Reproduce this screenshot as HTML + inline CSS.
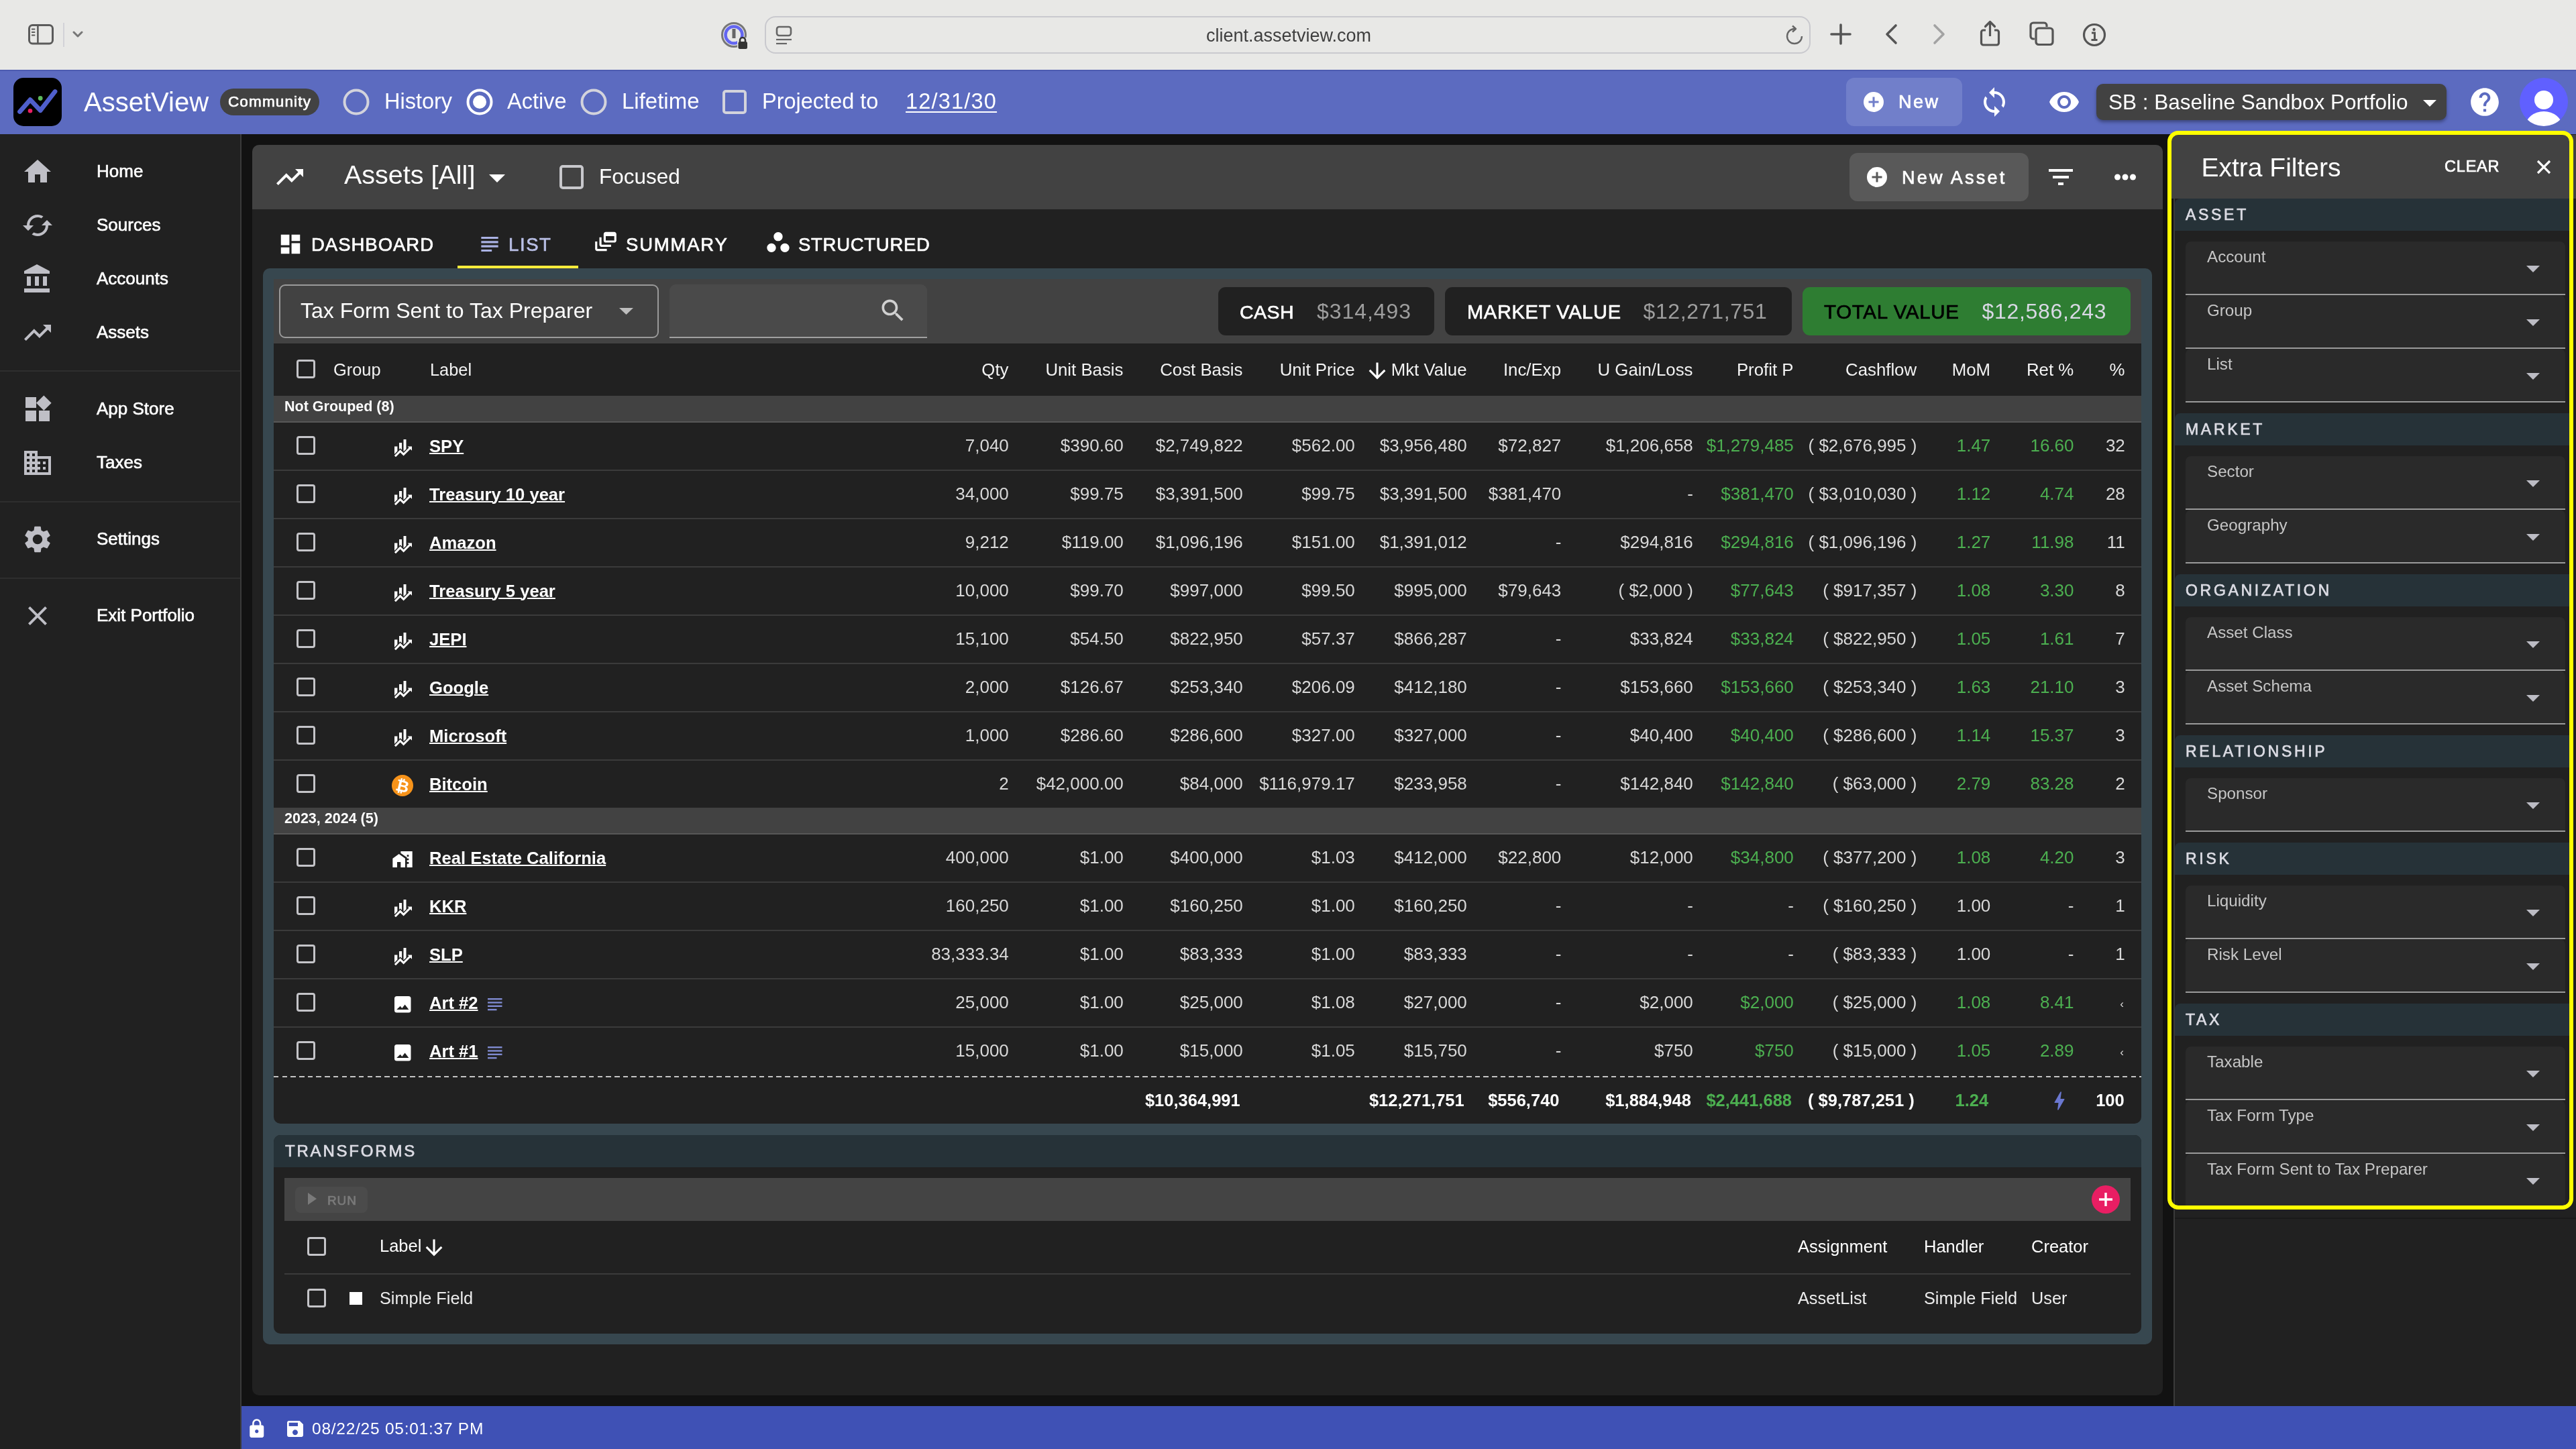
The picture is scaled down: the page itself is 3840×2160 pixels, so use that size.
<!DOCTYPE html><html><head><meta charset="utf-8"><style>
*{box-sizing:border-box;margin:0;padding:0}
html,body{width:3840px;height:2160px;overflow:hidden;background:#121212;font-family:"Liberation Sans",sans-serif}
.t{position:absolute;line-height:1;white-space:nowrap}
.r{position:absolute;display:block}
</style></head><body><div id="root" style="position:absolute;left:0;top:0;width:3840px;height:2160px;will-change:transform"><div class="r" style="left:0px;top:0px;width:3840px;height:104px;background:#e8e8e6;"></div>
<svg class="r" style="left:40px;top:34px;" width="42" height="34" viewBox="0 0 42 34"><rect x="3.5" y="3.5" width="35" height="27.5" rx="5" fill="none" stroke="#5b5b5b" stroke-width="3"/><line x1="16.4" y1="4" x2="16.4" y2="31" stroke="#5b5b5b" stroke-width="2.6"/><line x1="7" y1="9.5" x2="12.3" y2="9.5" stroke="#5b5b5b" stroke-width="2"/><line x1="7" y1="14" x2="12.3" y2="14" stroke="#5b5b5b" stroke-width="2"/><line x1="7" y1="18.5" x2="12.3" y2="18.5" stroke="#5b5b5b" stroke-width="2"/></svg>
<div class="r" style="left:94px;top:34px;width:2px;height:36px;background:#d2d2d8;"></div>
<svg class="r" style="left:108px;top:45px;" width="16" height="12" viewBox="0 0 16 12"><polyline points="2,3 8,9 14,3" fill="none" stroke="#777" stroke-width="3" stroke-linecap="round" stroke-linejoin="round"/></svg>
<svg class="r" style="left:1074px;top:31px;" width="44" height="44" viewBox="0 0 44 44"><circle cx="20" cy="21" r="17.5" fill="none" stroke="#777" stroke-width="3"/><circle cx="20" cy="21" r="12.5" fill="none" stroke="#6366f1" stroke-width="4.5"/><rect x="17.5" y="12" width="5" height="14" fill="#666"/><rect x="25" y="25" width="18" height="19" rx="3" fill="#e8e8e6"/><path d="M29 32v-3a4 4 0 0 1 8 0v3" fill="none" stroke="#333" stroke-width="2.6"/><rect x="26.5" y="31" width="13.5" height="11" rx="2.5" fill="#333"/></svg>
<div class="r" style="left:1140px;top:24px;width:1559px;height:56px;border:2.5px solid #c9c9ce;border-radius:16px"></div>
<svg class="r" style="left:1156px;top:38px;" width="26" height="30" viewBox="0 0 26 30"><rect x="2" y="2" width="21" height="13" rx="3.5" fill="none" stroke="#666" stroke-width="2.6"/><line x1="1" y1="21" x2="24" y2="21" stroke="#666" stroke-width="2.2"/><line x1="1" y1="27" x2="17" y2="27" stroke="#666" stroke-width="2.2"/></svg>
<div class="t" style="left:1921.0px;transform:translateX(-50%);top:40.1px;font-size:27px;color:#3f3f3f;">client.assetview.com</div>
<svg class="r" style="left:2660px;top:36px;" width="30" height="32" viewBox="0 0 30 32"><path d="M15 7 A11 11 0 1 0 26 18" fill="none" stroke="#666" stroke-width="2.4"/><polyline points="12,2.5 17,7 12,11.5" fill="none" stroke="#666" stroke-width="2.4" stroke-linejoin="round"/></svg>
<svg class="r" style="left:2728px;top:35px;" width="32" height="32" viewBox="0 0 32 32"><line x1="16" y1="2" x2="16" y2="30" stroke="#555" stroke-width="3.6" stroke-linecap="round"/><line x1="2" y1="16" x2="30" y2="16" stroke="#555" stroke-width="3.6" stroke-linecap="round"/></svg>
<svg class="r" style="left:2806px;top:35px;" width="26" height="32" viewBox="0 0 26 32"><polyline points="20,3 7,16 20,29" fill="none" stroke="#555" stroke-width="3.6" stroke-linecap="round" stroke-linejoin="round"/></svg>
<svg class="r" style="left:2878px;top:35px;" width="26" height="32" viewBox="0 0 26 32"><polyline points="6,3 19,16 6,29" fill="none" stroke="#a3a3a3" stroke-width="3.6" stroke-linecap="round" stroke-linejoin="round"/></svg>
<svg class="r" style="left:2948px;top:30px;" width="38" height="40" viewBox="0 0 38 40"><path d="M12 15H8.5a3 3 0 0 0-3 3v16a3 3 0 0 0 3 3h20a3 3 0 0 0 3-3V18a3 3 0 0 0-3-3H25" fill="none" stroke="#555" stroke-width="3.2"/><line x1="18.5" y1="3" x2="18.5" y2="24" stroke="#555" stroke-width="3.2"/><polyline points="11.5,9.5 18.5,2.5 25.5,9.5" fill="none" stroke="#555" stroke-width="3.2" stroke-linejoin="round" stroke-linecap="round"/></svg>
<svg class="r" style="left:3024px;top:31px;" width="40" height="40" viewBox="0 0 40 40"><path d="M9 27H7a4 4 0 0 1-4-4V7a4 4 0 0 1 4-4h16a4 4 0 0 1 4 4v2" fill="none" stroke="#555" stroke-width="3.2"/><rect x="11" y="11" width="25" height="24.5" rx="4" fill="none" stroke="#555" stroke-width="3.2"/></svg>
<svg class="r" style="left:3103px;top:33px;" width="38" height="38" viewBox="0 0 38 38"><circle cx="19" cy="19" r="15.5" fill="none" stroke="#555" stroke-width="3.2"/><circle cx="18.5" cy="11" r="2.2" fill="#555"/><path d="M15 16h4.5v10.5M14.5 26.5h9" fill="none" stroke="#555" stroke-width="3"/></svg>
<div class="r" style="left:0px;top:104px;width:3840px;height:96px;background:#5c6bc0;"></div>
<div class="r" style="left:0px;top:104px;width:3840px;height:2px;background:#4d5bb0;"></div>
<div class="r" style="left:20px;top:116px;width:72px;height:72px;background:#000;border-radius:15px"></div>
<svg class="r" style="left:20px;top:116px;" width="72" height="72" viewBox="0 0 72 72"><polyline points="9.5,50.5 25,32.7 40.2,48.7 62,20.5" fill="none" stroke="#4f5fcc" stroke-width="6.8" stroke-linecap="round" stroke-linejoin="round"/><circle cx="25" cy="49.3" r="3.3" fill="#e91e63"/><circle cx="40.2" cy="30.5" r="3.4" fill="#5cb85c"/></svg>
<div class="t" style="left:125.0px;top:132.1px;font-size:40px;color:#fff;">AssetView</div>
<div class="r" style="left:328px;top:132px;width:148px;height:40px;background:#424242;border-radius:20px"></div>
<div class="t" style="left:402.0px;transform:translateX(-50%);top:141.0px;font-size:22.5px;color:#fff;-webkit-text-stroke:0.7px #fff;letter-spacing:1.15px;">Community</div>
<svg class="r" style="left:511px;top:132px;" width="40" height="40" viewBox="0 0 40 40"><circle cx="20" cy="20" r="17.5" fill="none" stroke="#d3d3dc" stroke-width="4"/></svg>
<svg class="r" style="left:695px;top:132px;" width="40" height="40" viewBox="0 0 40 40"><circle cx="20" cy="20" r="17.5" fill="none" stroke="#fff" stroke-width="4"/><circle cx="20" cy="20" r="10" fill="#fff"/></svg>
<svg class="r" style="left:865px;top:132px;" width="40" height="40" viewBox="0 0 40 40"><circle cx="20" cy="20" r="17.5" fill="none" stroke="#d3d3dc" stroke-width="4"/></svg>
<div class="t" style="left:573.0px;top:134.5px;font-size:32.5px;color:#fff;">History</div>
<div class="t" style="left:756.0px;top:134.5px;font-size:32.5px;color:#fff;">Active</div>
<div class="t" style="left:927.0px;top:134.1px;font-size:33px;color:#fff;">Lifetime</div>
<div class="r" style="left:1077px;top:134px;width:36px;height:36px;border:4px solid #d3d3dc;border-radius:5px"></div>
<div class="t" style="left:1136.0px;top:134.5px;font-size:32.5px;color:#fff;">Projected to</div>
<div class="t" style="left:1350.0px;top:134.5px;font-size:32.5px;color:#fff;letter-spacing:1.2px;text-decoration:underline;text-decoration-thickness:2px;text-underline-offset:4px">12/31/30</div>
<div class="r" style="left:2752px;top:116px;width:173px;height:72px;background:#717fca;border-radius:12px"></div>
<svg class="r" style="left:2778px;top:137px;" width="30" height="30" viewBox="0 0 30 30"><circle cx="15" cy="15" r="15" fill="#fff"/><path d="M15 7.5v15M7.5 15h15" stroke="#717fca" stroke-width="3"/></svg>
<div class="t" style="left:2830.0px;top:139.1px;font-size:27px;color:#fff;-webkit-text-stroke:0.7px #fff;letter-spacing:2.5px;">New</div>
<svg class="r" style="left:2949px;top:128px;" width="48" height="48" viewBox="0 0 24 24"><path fill="#fff" d="M12 4V1L8 5l4 4V6c3.31 0 6 2.69 6 6 0 1.01-.25 1.97-.7 2.8l1.46 1.46C19.54 15.03 20 13.57 20 12c0-4.42-3.58-8-8-8zm0 14c-3.31 0-6-2.69-6-6 0-1.01.25-1.97.7-2.8L5.24 7.74C4.46 8.97 4 10.43 4 12c0 4.42 3.58 8 8 8v3l4-4-4-4v3z"/></svg>
<svg class="r" style="left:3053px;top:128px;" width="48" height="48" viewBox="0 0 24 24"><path fill="#fff" d="M12 4.5C7 4.5 2.73 7.61 1 12c1.73 4.39 6 7.5 11 7.5s9.27-3.11 11-7.5c-1.73-4.39-6-7.5-11-7.5zM12 17c-2.76 0-5-2.24-5-5s2.24-5 5-5 5 2.24 5 5-2.24 5-5 5zm0-8c-1.66 0-3 1.34-3 3s1.34 3 3 3 3-1.34 3-3-1.34-3-3-3z"/></svg>
<div class="r" style="left:3125px;top:125px;width:522px;height:54px;background:#424242;border-radius:10px;box-shadow:0 3px 5px rgba(0,0,0,0.35)"></div>
<div class="t" style="left:3143.0px;top:137.3px;font-size:31.5px;color:#fff;">SB : Baseline Sandbox Portfolio</div>
<svg class="r" style="left:3612px;top:149px;" width="20" height="10" viewBox="0 0 20 10"><path d="M0 0h20L10 10z" fill="#fff"/></svg>
<svg class="r" style="left:3679px;top:127px;" width="50" height="50" viewBox="0 0 24 24"><path fill="#fff" d="M12 2C6.48 2 2 6.48 2 12s4.48 10 10 10 10-4.48 10-10S17.52 2 12 2zm1 17h-2v-2h2v2zm2.07-7.75l-.9.92C13.45 12.9 13 13.5 13 15h-2v-.5c0-1.1.45-2.1 1.17-2.83l1.24-1.26c.37-.36.59-.86.59-1.41 0-1.1-.9-2-2-2s-2 .9-2 2H8c0-2.21 1.79-4 4-4s4 1.79 4 4c0 .88-.36 1.68-.93 2.25z"/></svg>
<div class="r" style="left:3756px;top:116px;width:72px;height:72px;background:#6060ff;border-radius:50%;overflow:hidden"><svg width="72" height="72" viewBox="0 0 72 72"><circle cx="36" cy="33" r="14" fill="#fff"/><ellipse cx="36" cy="72" rx="27" ry="22" fill="#fff"/></svg></div>
<div class="r" style="left:0px;top:200px;width:358px;height:1960px;background:#212121;"></div>
<div class="r" style="left:358px;top:200px;width:2px;height:1960px;background:#3a3a3a;"></div>
<svg class="r" style="left:32px;top:232px;" width="48" height="48" viewBox="0 0 24 24"><path fill="#bfbfc6" d="M10 20v-6h4v6h5v-8h3L12 3 2 12h3v8z"/></svg>
<div class="t" style="left:144.0px;top:241.5px;font-size:26px;color:#fff;-webkit-text-stroke:0.6px #fff">Home</div>
<svg class="r" style="left:32px;top:312px;" width="48" height="48" viewBox="0 0 24 24"><path fill="#bfbfc6" d="M19 8l-4 4h3c0 3.31-2.69 6-6 6-1.01 0-1.97-.25-2.8-.7l-1.46 1.46C8.97 19.54 10.43 20 12 20c4.42 0 8-3.58 8-8h3l-4-4zM6 12c0-3.310 2.690-6 6-6 1.010 0 1.970.25 2.800.7l1.460-1.460C15.030 4.460 13.570 4 12 4c-4.420 0-8 3.580-8 8H1l4 4 4-4H6z"/></svg>
<div class="t" style="left:144.0px;top:321.5px;font-size:26px;color:#fff;-webkit-text-stroke:0.6px #fff">Sources</div>
<svg class="r" style="left:32px;top:392px;" width="48" height="48" viewBox="0 0 24 24"><path fill="#bfbfc6" d="M4 10v7h3v-7H4zm6 0v7h3v-7h-3zM2 22h19v-3H2v3zm14-12v7h3v-7h-3zm-4.5-9L2 6v2h19V6l-9.5-5z"/></svg>
<div class="t" style="left:144.0px;top:401.5px;font-size:26px;color:#fff;-webkit-text-stroke:0.6px #fff">Accounts</div>
<svg class="r" style="left:32px;top:472px;" width="48" height="48" viewBox="0 0 24 24"><path fill="#bfbfc6" d="M16 6l2.29 2.29-4.88 4.88-4-4L2 16.59 3.41 18l6-6 4 4 6.3-6.29L22 12V6z"/></svg>
<div class="t" style="left:144.0px;top:481.5px;font-size:26px;color:#fff;-webkit-text-stroke:0.6px #fff">Assets</div>
<svg class="r" style="left:32px;top:586px;" width="48" height="48" viewBox="0 0 24 24"><path fill="#bfbfc6" d="M13 13v8h8v-8h-8zM3 21h8v-8H3v8zM3 3v8h8V3H3zm13.66-1.31L11 7.34 16.66 13l5.66-5.66-5.66-5.65z"/></svg>
<div class="t" style="left:144.0px;top:595.5px;font-size:26px;color:#fff;-webkit-text-stroke:0.6px #fff">App Store</div>
<svg class="r" style="left:32px;top:666px;" width="48" height="48" viewBox="0 0 24 24"><path fill="#bfbfc6" d="M12 7V3H2v18h20V7H12zM6 19H4v-2h2v2zm0-4H4v-2h2v2zm0-4H4V9h2v2zm0-4H4V5h2v2zm4 12H8v-2h2v2zm0-4H8v-2h2v2zm0-4H8V9h2v2zm0-4H8V5h2v2zm10 12h-8v-2h2v-2h-2v-2h2v-2h-2V9h8v10zm-2-8h-2v2h2v-2zm0 4h-2v2h2v-2z"/></svg>
<div class="t" style="left:144.0px;top:675.5px;font-size:26px;color:#fff;-webkit-text-stroke:0.6px #fff">Taxes</div>
<svg class="r" style="left:32px;top:780px;" width="48" height="48" viewBox="0 0 24 24"><path fill="#bfbfc6" d="M19.14 12.94c.04-.3.06-.61.06-.94 0-.32-.02-.64-.07-.94l2.03-1.58c.18-.14.23-.41.12-.61l-1.92-3.32c-.12-.22-.37-.29-.59-.22l-2.39.96c-.5-.38-1.03-.7-1.62-.94l-.36-2.54c-.04-.24-.24-.41-.48-.41h-3.84c-.24 0-.43.17-.47.41l-.36 2.54c-.59.24-1.13.57-1.62.94l-2.39-.96c-.22-.08-.47 0-.59.22L2.74 8.87c-.12.21-.08.47.12.61l2.03 1.58c-.05.3-.09.63-.09.94s.02.64.07.94l-2.03 1.58c-.18.14-.23.41-.12.61l1.92 3.32c.12.22.37.29.59.22l2.39-.96c.5.38 1.03.7 1.62.94l.36 2.54c.05.24.24.41.48.41h3.84c.24 0 .44-.17.47-.41l.36-2.54c.59-.24 1.13-.56 1.62-.94l2.39.96c.22.08.47 0 .59-.22l1.92-3.32c.12-.22.07-.47-.12-.61l-2.01-1.58zM12 15.6c-1.98 0-3.6-1.62-3.6-3.6s1.62-3.6 3.6-3.6 3.6 1.62 3.6 3.6-1.62 3.6-3.6 3.6z"/></svg>
<div class="t" style="left:144.0px;top:789.5px;font-size:26px;color:#fff;-webkit-text-stroke:0.6px #fff">Settings</div>
<svg class="r" style="left:32px;top:894px;" width="48" height="48" viewBox="0 0 24 24"><path fill="#bfbfc6" d="M19 6.41L17.59 5 12 10.59 6.41 5 5 6.41 10.59 12 5 17.59 6.41 19 12 13.41 17.59 19 19 17.59 13.41 12z"/></svg>
<div class="t" style="left:144.0px;top:903.5px;font-size:26px;color:#fff;-webkit-text-stroke:0.6px #fff">Exit Portfolio</div>
<div class="r" style="left:0px;top:552px;width:358px;height:2px;background:#2e2e2e;"></div>
<div class="r" style="left:0px;top:746.5px;width:358px;height:2px;background:#2e2e2e;"></div>
<div class="r" style="left:0px;top:860.5px;width:358px;height:2px;background:#2e2e2e;"></div>
<div class="r" style="left:376px;top:216px;width:2848px;height:1864px;background:#212121;border-radius:10px;overflow:hidden"><div style="position:absolute;left:0;top:0;width:2848px;height:96px;background:#424242"></div></div>
<svg class="r" style="left:408px;top:240px;" width="48" height="48" viewBox="0 0 24 24"><path fill="#fff" d="M16 6l2.29 2.29-4.88 4.88-4-4L2 16.59 3.41 18l6-6 4 4 6.3-6.29L22 12V6z"/></svg>
<div class="t" style="left:513.0px;top:240.6px;font-size:39.5px;color:#fff;">Assets [All]</div>
<svg class="r" style="left:729px;top:260px;" width="24" height="12" viewBox="0 0 24 12"><path d="M0 0h24L12 12z" fill="#fff"/></svg>
<div class="r" style="left:834px;top:246px;width:36px;height:36px;border:4px solid #c8c8cc;border-radius:5px"></div>
<div class="t" style="left:893.0px;top:248.3px;font-size:31.5px;color:#fff;">Focused</div>
<div class="r" style="left:2757px;top:228px;width:267px;height:72px;background:#595959;border-radius:12px"></div>
<svg class="r" style="left:2783px;top:249px;" width="30" height="30" viewBox="0 0 30 30"><circle cx="15" cy="15" r="15" fill="#fff"/><path d="M15 7.5v15M7.5 15h15" stroke="#595959" stroke-width="3"/></svg>
<div class="t" style="left:2835.0px;top:251.6px;font-size:27px;color:#fff;-webkit-text-stroke:0.7px #fff;letter-spacing:3.2px;">New Asset</div>
<svg class="r" style="left:3054px;top:252px;" width="36" height="24" viewBox="0 0 36 24"><rect x="0" y="0" width="36" height="4" fill="#fff"/><rect x="6" y="10" width="24" height="4" fill="#fff"/><rect x="14" y="20" width="8" height="4" fill="#fff"/></svg>
<svg class="r" style="left:3152px;top:257px;" width="32" height="14" viewBox="0 0 32 14"><circle cx="4.5" cy="7" r="4.5" fill="#fff"/><circle cx="16" cy="7" r="4.5" fill="#fff"/><circle cx="27.5" cy="7" r="4.5" fill="#fff"/></svg>
<svg class="r" style="left:414px;top:345px;" width="38" height="38" viewBox="0 0 24 24"><path fill="#fff" d="M3 13h8V3H3v10zm0 8h8v-6H3v6zm10 0h8V11h-8v10zm0-18v6h8V3h-8z"/></svg>
<div class="t" style="left:464.0px;top:350.7px;font-size:27.5px;color:#fff;-webkit-text-stroke:0.7px #fff;letter-spacing:0.98px;">DASHBOARD</div>
<svg class="r" style="left:711px;top:345px;" width="38" height="38" viewBox="0 0 24 24"><path fill="#aab2e4" d="M14 17H4v2h10v-2zm6-8H4v2h16V9zM4 15h16v-2H4v2zM4 5v2h16V5H4z"/></svg>
<div class="t" style="left:758.0px;top:350.7px;font-size:27.5px;color:#b9bfe6;-webkit-text-stroke:0.7px #b9bfe6;letter-spacing:1.6px;">LIST</div>
<div class="r" style="left:682px;top:396px;width:180px;height:4px;background:#ffeb3b;"></div>
<svg class="r" style="left:884px;top:341px;" width="38" height="38" viewBox="0 0 24 24"><path fill="#fff" d="M8 8H6v7c0 1.1.9 2 2 2h9v-2H8V8zM20 3h-8c-1.1 0-2 .9-2 2v6c0 1.1.9 2 2 2h8c1.1 0 2-.9 2-2V5c0-1.1-.9-2-2-2zm0 8h-8V7h8v4zM4 12H2v7c0 1.1.9 2 2 2h9v-2H4v-7z"/></svg>
<div class="t" style="left:933.0px;top:350.7px;font-size:27.5px;color:#fff;-webkit-text-stroke:0.7px #fff;letter-spacing:1.8px;">SUMMARY</div>
<svg class="r" style="left:1140px;top:341px;" width="40" height="40" viewBox="0 0 24 24"><path fill="#fff" d="M6 13c-2.2 0-4 1.8-4 4s1.8 4 4 4 4-1.8 4-4-1.8-4-4-4zm6-10C9.8 3 8 4.8 8 7s1.8 4 4 4 4-1.8 4-4-1.8-4-4-4zm6 10c-2.2 0-4 1.8-4 4s1.8 4 4 4 4-1.8 4-4-1.8-4-4-4z"/></svg>
<div class="t" style="left:1190.0px;top:350.7px;font-size:27.5px;color:#fff;-webkit-text-stroke:0.7px #fff;letter-spacing:0.72px;">STRUCTURED</div>
<div class="r" style="left:392px;top:400px;width:2816px;height:1604px;background:#37474f;border-radius:10px"></div>
<div class="r" style="left:408px;top:416px;width:2784px;height:96px;background:#424242;"></div>
<div class="r" style="left:416px;top:424px;width:566px;height:80px;border:2.5px solid #9a9a9a;border-radius:9px"></div>
<div class="t" style="left:448.0px;top:446.9px;font-size:32px;color:#fff;">Tax Form Sent to Tax Preparer</div>
<svg class="r" style="left:923px;top:459px;" width="21" height="10" viewBox="0 0 21 10"><path d="M0 0h21L10.5 10z" fill="#bdbdbd"/></svg>
<div class="r" style="left:998px;top:424px;width:384px;height:80px;background:#4a4a4a;border-radius:9px 9px 0 0;border-bottom:2.5px solid #a0a0a0"></div>
<svg class="r" style="left:1309px;top:441px;" width="44" height="44" viewBox="0 0 24 24"><path fill="#d0d0d0" d="M15.5 14h-.79l-.28-.27C15.41 12.59 16 11.11 16 9.5 16 5.91 13.09 3 9.5 3S3 5.91 3 9.5 5.91 16 9.5 16c1.61 0 3.09-.59 4.230-1.570l.27.28v.79l5 4.99L20.49 19l-4.99-5zm-6 0C7.01 14 5 11.99 5 9.5S7.01 5 9.5 5 14 7.01 14 9.5 11.99 14 9.5 14z"/></svg>
<div class="r" style="left:1816px;top:428px;width:322px;height:72px;background:#212121;border-radius:11px"></div>
<div class="t" style="left:1848.0px;top:450.9px;font-size:28.5px;color:#fff;-webkit-text-stroke:0.7px #fff;letter-spacing:0.47px;">CASH</div>
<div class="t" style="left:1963.0px;top:448.4px;font-size:32px;color:#9e9e9e;letter-spacing:0.95px;">$314,493</div>
<div class="r" style="left:2154px;top:428px;width:517px;height:72px;background:#212121;border-radius:11px"></div>
<div class="t" style="left:2187.0px;top:450.5px;font-size:29px;color:#fff;-webkit-text-stroke:0.7px #fff;letter-spacing:0.7px;">MARKET VALUE</div>
<div class="t" style="left:2449.5px;top:448.4px;font-size:32px;color:#9e9e9e;letter-spacing:0.64px;">$12,271,751</div>
<div class="r" style="left:2687px;top:428px;width:489px;height:72px;background:#2e7d32;border-radius:11px"></div>
<div class="t" style="left:2719.0px;top:450.0px;font-size:29.5px;color:#000;-webkit-text-stroke:0.7px #000;letter-spacing:0.7px;">TOTAL VALUE</div>
<div class="t" style="left:2954.5px;top:448.4px;font-size:32px;color:#d8d8e4;letter-spacing:0.7px;">$12,586,243</div>
<div class="r" style="left:408px;top:512px;width:2784px;height:1163px;background:#212121;border-radius:0 0 10px 10px"></div>
<div class="r" style="left:442px;top:536px;width:28px;height:28px;border:3.5px solid #c4c4c8;border-radius:4px"></div>
<div class="t" style="left:497.0px;top:538.8px;font-size:25.4px;color:#f2f2f2;">Group</div>
<div class="t" style="left:641.0px;top:538.8px;font-size:25.4px;color:#f2f2f2;">Label</div>
<div class="t" style="right:2336.5px;top:538.5px;font-size:25.8px;color:#f2f2f2;">Qty</div>
<div class="t" style="right:2165.5px;top:538.5px;font-size:25.8px;color:#f2f2f2;">Unit Basis</div>
<div class="t" style="right:1987.5px;top:538.5px;font-size:25.8px;color:#f2f2f2;">Cost Basis</div>
<div class="t" style="right:1820.5px;top:538.5px;font-size:25.8px;color:#f2f2f2;">Unit Price</div>
<div class="t" style="right:1653.5px;top:538.5px;font-size:25.8px;color:#f2f2f2;">Mkt Value</div>
<div class="t" style="right:1513.0px;top:538.5px;font-size:25.8px;color:#f2f2f2;">Inc/Exp</div>
<div class="t" style="right:1316.5px;top:538.5px;font-size:25.8px;color:#f2f2f2;">U Gain/Loss</div>
<div class="t" style="right:1166.5px;top:538.5px;font-size:25.8px;color:#f2f2f2;">Profit P</div>
<div class="t" style="right:982.9px;top:538.5px;font-size:25.8px;color:#f2f2f2;">Cashflow</div>
<div class="t" style="right:873.0px;top:538.5px;font-size:25.8px;color:#f2f2f2;">MoM</div>
<div class="t" style="right:748.8px;top:538.5px;font-size:25.8px;color:#f2f2f2;">Ret %</div>
<div class="t" style="right:672.5px;top:538.5px;font-size:25.8px;color:#f2f2f2;">%</div>
<svg class="r" style="left:2039px;top:539px;" width="28" height="28" viewBox="3 3 18 18"><path fill="#fff" d="M20 12l-1.41-1.41L13 16.17V4h-2v12.17l-5.58-5.59L4 12l8 8 8-8z"/></svg>
<div class="r" style="left:408px;top:590px;width:2784px;height:38px;background:#424242;"></div>
<div class="r" style="left:408px;top:628px;width:2784px;height:2px;background:#575757;"></div>
<div class="t" style="left:424.0px;top:596.3px;font-size:21.5px;color:#fff;font-weight:700;">Not Grouped (8)</div>
<div class="r" style="left:442px;top:650px;width:28px;height:28px;border:3.5px solid #c4c4c8;border-radius:4px"></div>
<svg class="r" style="left:588px;top:655px;" width="26" height="26" viewBox="0 0 26 26"><path fill="#fff" d="M0 10.5h4.4v7L0 22z M7 5.1h4.1v10.7l-2.5-2.5L7 14.9z M13.5 0h4v14.4l-4 3.9z M19.6 10.4h6.4v6.4z"/><polyline points="0.9,25.2 8.6,17.4 13.6,22.4 23.5,12.5" fill="none" stroke="#fff" stroke-width="3"/></svg>
<div class="t" style="left:640.0px;top:652.5px;font-size:25.6px;color:#fff;font-weight:700;text-decoration:underline;text-decoration-thickness:2.4px;text-underline-offset:1.4px">SPY</div>
<div class="t" style="right:2336.2px;top:651.0px;font-size:26px;color:#d8d8d8;">7,040</div>
<div class="t" style="right:2165.2px;top:651.0px;font-size:26px;color:#d8d8d8;">$390.60</div>
<div class="t" style="right:1987.2px;top:651.0px;font-size:26px;color:#d8d8d8;">$2,749,822</div>
<div class="t" style="right:1820.2px;top:651.0px;font-size:26px;color:#d8d8d8;">$562.00</div>
<div class="t" style="right:1653.2px;top:651.0px;font-size:26px;color:#d8d8d8;">$3,956,480</div>
<div class="t" style="right:1512.7px;top:651.0px;font-size:26px;color:#d8d8d8;">$72,827</div>
<div class="t" style="right:1316.2px;top:651.0px;font-size:26px;color:#d8d8d8;">$1,206,658</div>
<div class="t" style="right:1166.2px;top:651.0px;font-size:26px;color:#4caf50;">$1,279,485</div>
<div class="t" style="right:982.6px;top:651.0px;font-size:26px;color:#d8d8d8;">( $2,676,995 )</div>
<div class="t" style="right:872.7px;top:651.0px;font-size:26px;color:#4caf50;">1.47</div>
<div class="t" style="right:748.5px;top:651.0px;font-size:26px;color:#4caf50;">16.60</div>
<div class="t" style="right:672.2px;top:651.0px;font-size:26px;color:#d8d8d8;">32</div>
<div class="r" style="left:408px;top:700px;width:2784px;height:2px;background:#3b3b3b;"></div>
<div class="r" style="left:442px;top:722px;width:28px;height:28px;border:3.5px solid #c4c4c8;border-radius:4px"></div>
<svg class="r" style="left:588px;top:727px;" width="26" height="26" viewBox="0 0 26 26"><path fill="#fff" d="M0 10.5h4.4v7L0 22z M7 5.1h4.1v10.7l-2.5-2.5L7 14.9z M13.5 0h4v14.4l-4 3.9z M19.6 10.4h6.4v6.4z"/><polyline points="0.9,25.2 8.6,17.4 13.6,22.4 23.5,12.5" fill="none" stroke="#fff" stroke-width="3"/></svg>
<div class="t" style="left:640.0px;top:724.5px;font-size:25.6px;color:#fff;font-weight:700;text-decoration:underline;text-decoration-thickness:2.4px;text-underline-offset:1.4px">Treasury 10 year</div>
<div class="t" style="right:2336.2px;top:723.0px;font-size:26px;color:#d8d8d8;">34,000</div>
<div class="t" style="right:2165.2px;top:723.0px;font-size:26px;color:#d8d8d8;">$99.75</div>
<div class="t" style="right:1987.2px;top:723.0px;font-size:26px;color:#d8d8d8;">$3,391,500</div>
<div class="t" style="right:1820.2px;top:723.0px;font-size:26px;color:#d8d8d8;">$99.75</div>
<div class="t" style="right:1653.2px;top:723.0px;font-size:26px;color:#d8d8d8;">$3,391,500</div>
<div class="t" style="right:1512.7px;top:723.0px;font-size:26px;color:#d8d8d8;">$381,470</div>
<div class="t" style="right:1316.2px;top:723.0px;font-size:26px;color:#d8d8d8;">-</div>
<div class="t" style="right:1166.2px;top:723.0px;font-size:26px;color:#4caf50;">$381,470</div>
<div class="t" style="right:982.6px;top:723.0px;font-size:26px;color:#d8d8d8;">( $3,010,030 )</div>
<div class="t" style="right:872.7px;top:723.0px;font-size:26px;color:#4caf50;">1.12</div>
<div class="t" style="right:748.5px;top:723.0px;font-size:26px;color:#4caf50;">4.74</div>
<div class="t" style="right:672.2px;top:723.0px;font-size:26px;color:#d8d8d8;">28</div>
<div class="r" style="left:408px;top:772px;width:2784px;height:2px;background:#3b3b3b;"></div>
<div class="r" style="left:442px;top:794px;width:28px;height:28px;border:3.5px solid #c4c4c8;border-radius:4px"></div>
<svg class="r" style="left:588px;top:799px;" width="26" height="26" viewBox="0 0 26 26"><path fill="#fff" d="M0 10.5h4.4v7L0 22z M7 5.1h4.1v10.7l-2.5-2.5L7 14.9z M13.5 0h4v14.4l-4 3.9z M19.6 10.4h6.4v6.4z"/><polyline points="0.9,25.2 8.6,17.4 13.6,22.4 23.5,12.5" fill="none" stroke="#fff" stroke-width="3"/></svg>
<div class="t" style="left:640.0px;top:796.5px;font-size:25.6px;color:#fff;font-weight:700;text-decoration:underline;text-decoration-thickness:2.4px;text-underline-offset:1.4px">Amazon</div>
<div class="t" style="right:2336.2px;top:795.0px;font-size:26px;color:#d8d8d8;">9,212</div>
<div class="t" style="right:2165.2px;top:795.0px;font-size:26px;color:#d8d8d8;">$119.00</div>
<div class="t" style="right:1987.2px;top:795.0px;font-size:26px;color:#d8d8d8;">$1,096,196</div>
<div class="t" style="right:1820.2px;top:795.0px;font-size:26px;color:#d8d8d8;">$151.00</div>
<div class="t" style="right:1653.2px;top:795.0px;font-size:26px;color:#d8d8d8;">$1,391,012</div>
<div class="t" style="right:1512.7px;top:795.0px;font-size:26px;color:#d8d8d8;">-</div>
<div class="t" style="right:1316.2px;top:795.0px;font-size:26px;color:#d8d8d8;">$294,816</div>
<div class="t" style="right:1166.2px;top:795.0px;font-size:26px;color:#4caf50;">$294,816</div>
<div class="t" style="right:982.6px;top:795.0px;font-size:26px;color:#d8d8d8;">( $1,096,196 )</div>
<div class="t" style="right:872.7px;top:795.0px;font-size:26px;color:#4caf50;">1.27</div>
<div class="t" style="right:748.5px;top:795.0px;font-size:26px;color:#4caf50;">11.98</div>
<div class="t" style="right:672.2px;top:795.0px;font-size:26px;color:#d8d8d8;">11</div>
<div class="r" style="left:408px;top:844px;width:2784px;height:2px;background:#3b3b3b;"></div>
<div class="r" style="left:442px;top:866px;width:28px;height:28px;border:3.5px solid #c4c4c8;border-radius:4px"></div>
<svg class="r" style="left:588px;top:871px;" width="26" height="26" viewBox="0 0 26 26"><path fill="#fff" d="M0 10.5h4.4v7L0 22z M7 5.1h4.1v10.7l-2.5-2.5L7 14.9z M13.5 0h4v14.4l-4 3.9z M19.6 10.4h6.4v6.4z"/><polyline points="0.9,25.2 8.6,17.4 13.6,22.4 23.5,12.5" fill="none" stroke="#fff" stroke-width="3"/></svg>
<div class="t" style="left:640.0px;top:868.5px;font-size:25.6px;color:#fff;font-weight:700;text-decoration:underline;text-decoration-thickness:2.4px;text-underline-offset:1.4px">Treasury 5 year</div>
<div class="t" style="right:2336.2px;top:867.0px;font-size:26px;color:#d8d8d8;">10,000</div>
<div class="t" style="right:2165.2px;top:867.0px;font-size:26px;color:#d8d8d8;">$99.70</div>
<div class="t" style="right:1987.2px;top:867.0px;font-size:26px;color:#d8d8d8;">$997,000</div>
<div class="t" style="right:1820.2px;top:867.0px;font-size:26px;color:#d8d8d8;">$99.50</div>
<div class="t" style="right:1653.2px;top:867.0px;font-size:26px;color:#d8d8d8;">$995,000</div>
<div class="t" style="right:1512.7px;top:867.0px;font-size:26px;color:#d8d8d8;">$79,643</div>
<div class="t" style="right:1316.2px;top:867.0px;font-size:26px;color:#d8d8d8;">( $2,000 )</div>
<div class="t" style="right:1166.2px;top:867.0px;font-size:26px;color:#4caf50;">$77,643</div>
<div class="t" style="right:982.6px;top:867.0px;font-size:26px;color:#d8d8d8;">( $917,357 )</div>
<div class="t" style="right:872.7px;top:867.0px;font-size:26px;color:#4caf50;">1.08</div>
<div class="t" style="right:748.5px;top:867.0px;font-size:26px;color:#4caf50;">3.30</div>
<div class="t" style="right:672.2px;top:867.0px;font-size:26px;color:#d8d8d8;">8</div>
<div class="r" style="left:408px;top:916px;width:2784px;height:2px;background:#3b3b3b;"></div>
<div class="r" style="left:442px;top:938px;width:28px;height:28px;border:3.5px solid #c4c4c8;border-radius:4px"></div>
<svg class="r" style="left:588px;top:943px;" width="26" height="26" viewBox="0 0 26 26"><path fill="#fff" d="M0 10.5h4.4v7L0 22z M7 5.1h4.1v10.7l-2.5-2.5L7 14.9z M13.5 0h4v14.4l-4 3.9z M19.6 10.4h6.4v6.4z"/><polyline points="0.9,25.2 8.6,17.4 13.6,22.4 23.5,12.5" fill="none" stroke="#fff" stroke-width="3"/></svg>
<div class="t" style="left:640.0px;top:940.5px;font-size:25.6px;color:#fff;font-weight:700;text-decoration:underline;text-decoration-thickness:2.4px;text-underline-offset:1.4px">JEPI</div>
<div class="t" style="right:2336.2px;top:939.0px;font-size:26px;color:#d8d8d8;">15,100</div>
<div class="t" style="right:2165.2px;top:939.0px;font-size:26px;color:#d8d8d8;">$54.50</div>
<div class="t" style="right:1987.2px;top:939.0px;font-size:26px;color:#d8d8d8;">$822,950</div>
<div class="t" style="right:1820.2px;top:939.0px;font-size:26px;color:#d8d8d8;">$57.37</div>
<div class="t" style="right:1653.2px;top:939.0px;font-size:26px;color:#d8d8d8;">$866,287</div>
<div class="t" style="right:1512.7px;top:939.0px;font-size:26px;color:#d8d8d8;">-</div>
<div class="t" style="right:1316.2px;top:939.0px;font-size:26px;color:#d8d8d8;">$33,824</div>
<div class="t" style="right:1166.2px;top:939.0px;font-size:26px;color:#4caf50;">$33,824</div>
<div class="t" style="right:982.6px;top:939.0px;font-size:26px;color:#d8d8d8;">( $822,950 )</div>
<div class="t" style="right:872.7px;top:939.0px;font-size:26px;color:#4caf50;">1.05</div>
<div class="t" style="right:748.5px;top:939.0px;font-size:26px;color:#4caf50;">1.61</div>
<div class="t" style="right:672.2px;top:939.0px;font-size:26px;color:#d8d8d8;">7</div>
<div class="r" style="left:408px;top:988px;width:2784px;height:2px;background:#3b3b3b;"></div>
<div class="r" style="left:442px;top:1010px;width:28px;height:28px;border:3.5px solid #c4c4c8;border-radius:4px"></div>
<svg class="r" style="left:588px;top:1015px;" width="26" height="26" viewBox="0 0 26 26"><path fill="#fff" d="M0 10.5h4.4v7L0 22z M7 5.1h4.1v10.7l-2.5-2.5L7 14.9z M13.5 0h4v14.4l-4 3.9z M19.6 10.4h6.4v6.4z"/><polyline points="0.9,25.2 8.6,17.4 13.6,22.4 23.5,12.5" fill="none" stroke="#fff" stroke-width="3"/></svg>
<div class="t" style="left:640.0px;top:1012.5px;font-size:25.6px;color:#fff;font-weight:700;text-decoration:underline;text-decoration-thickness:2.4px;text-underline-offset:1.4px">Google</div>
<div class="t" style="right:2336.2px;top:1011.0px;font-size:26px;color:#d8d8d8;">2,000</div>
<div class="t" style="right:2165.2px;top:1011.0px;font-size:26px;color:#d8d8d8;">$126.67</div>
<div class="t" style="right:1987.2px;top:1011.0px;font-size:26px;color:#d8d8d8;">$253,340</div>
<div class="t" style="right:1820.2px;top:1011.0px;font-size:26px;color:#d8d8d8;">$206.09</div>
<div class="t" style="right:1653.2px;top:1011.0px;font-size:26px;color:#d8d8d8;">$412,180</div>
<div class="t" style="right:1512.7px;top:1011.0px;font-size:26px;color:#d8d8d8;">-</div>
<div class="t" style="right:1316.2px;top:1011.0px;font-size:26px;color:#d8d8d8;">$153,660</div>
<div class="t" style="right:1166.2px;top:1011.0px;font-size:26px;color:#4caf50;">$153,660</div>
<div class="t" style="right:982.6px;top:1011.0px;font-size:26px;color:#d8d8d8;">( $253,340 )</div>
<div class="t" style="right:872.7px;top:1011.0px;font-size:26px;color:#4caf50;">1.63</div>
<div class="t" style="right:748.5px;top:1011.0px;font-size:26px;color:#4caf50;">21.10</div>
<div class="t" style="right:672.2px;top:1011.0px;font-size:26px;color:#d8d8d8;">3</div>
<div class="r" style="left:408px;top:1060px;width:2784px;height:2px;background:#3b3b3b;"></div>
<div class="r" style="left:442px;top:1082px;width:28px;height:28px;border:3.5px solid #c4c4c8;border-radius:4px"></div>
<svg class="r" style="left:588px;top:1087px;" width="26" height="26" viewBox="0 0 26 26"><path fill="#fff" d="M0 10.5h4.4v7L0 22z M7 5.1h4.1v10.7l-2.5-2.5L7 14.9z M13.5 0h4v14.4l-4 3.9z M19.6 10.4h6.4v6.4z"/><polyline points="0.9,25.2 8.6,17.4 13.6,22.4 23.5,12.5" fill="none" stroke="#fff" stroke-width="3"/></svg>
<div class="t" style="left:640.0px;top:1084.5px;font-size:25.6px;color:#fff;font-weight:700;text-decoration:underline;text-decoration-thickness:2.4px;text-underline-offset:1.4px">Microsoft</div>
<div class="t" style="right:2336.2px;top:1083.0px;font-size:26px;color:#d8d8d8;">1,000</div>
<div class="t" style="right:2165.2px;top:1083.0px;font-size:26px;color:#d8d8d8;">$286.60</div>
<div class="t" style="right:1987.2px;top:1083.0px;font-size:26px;color:#d8d8d8;">$286,600</div>
<div class="t" style="right:1820.2px;top:1083.0px;font-size:26px;color:#d8d8d8;">$327.00</div>
<div class="t" style="right:1653.2px;top:1083.0px;font-size:26px;color:#d8d8d8;">$327,000</div>
<div class="t" style="right:1512.7px;top:1083.0px;font-size:26px;color:#d8d8d8;">-</div>
<div class="t" style="right:1316.2px;top:1083.0px;font-size:26px;color:#d8d8d8;">$40,400</div>
<div class="t" style="right:1166.2px;top:1083.0px;font-size:26px;color:#4caf50;">$40,400</div>
<div class="t" style="right:982.6px;top:1083.0px;font-size:26px;color:#d8d8d8;">( $286,600 )</div>
<div class="t" style="right:872.7px;top:1083.0px;font-size:26px;color:#4caf50;">1.14</div>
<div class="t" style="right:748.5px;top:1083.0px;font-size:26px;color:#4caf50;">15.37</div>
<div class="t" style="right:672.2px;top:1083.0px;font-size:26px;color:#d8d8d8;">3</div>
<div class="r" style="left:408px;top:1132px;width:2784px;height:2px;background:#3b3b3b;"></div>
<div class="r" style="left:442px;top:1154px;width:28px;height:28px;border:3.5px solid #c4c4c8;border-radius:4px"></div>
<div class="r" style="left:584px;top:1155px;width:32px;height:32px;border-radius:50%;background:#f7931a"></div>
<div class="t" style="left:600.0px;transform:translateX(-50%);top:1159.7px;font-size:24px;color:#fff;font-weight:700;transform:translateX(-50%) rotate(14deg)">₿</div>
<div class="t" style="left:640.0px;top:1156.5px;font-size:25.6px;color:#fff;font-weight:700;text-decoration:underline;text-decoration-thickness:2.4px;text-underline-offset:1.4px">Bitcoin</div>
<div class="t" style="right:2336.2px;top:1155.0px;font-size:26px;color:#d8d8d8;">2</div>
<div class="t" style="right:2165.2px;top:1155.0px;font-size:26px;color:#d8d8d8;">$42,000.00</div>
<div class="t" style="right:1987.2px;top:1155.0px;font-size:26px;color:#d8d8d8;">$84,000</div>
<div class="t" style="right:1820.2px;top:1155.0px;font-size:26px;color:#d8d8d8;">$116,979.17</div>
<div class="t" style="right:1653.2px;top:1155.0px;font-size:26px;color:#d8d8d8;">$233,958</div>
<div class="t" style="right:1512.7px;top:1155.0px;font-size:26px;color:#d8d8d8;">-</div>
<div class="t" style="right:1316.2px;top:1155.0px;font-size:26px;color:#d8d8d8;">$142,840</div>
<div class="t" style="right:1166.2px;top:1155.0px;font-size:26px;color:#4caf50;">$142,840</div>
<div class="t" style="right:982.6px;top:1155.0px;font-size:26px;color:#d8d8d8;">( $63,000 )</div>
<div class="t" style="right:872.7px;top:1155.0px;font-size:26px;color:#4caf50;">2.79</div>
<div class="t" style="right:748.5px;top:1155.0px;font-size:26px;color:#4caf50;">83.28</div>
<div class="t" style="right:672.2px;top:1155.0px;font-size:26px;color:#d8d8d8;">2</div>
<div class="r" style="left:408px;top:1204px;width:2784px;height:38px;background:#424242;"></div>
<div class="r" style="left:408px;top:1242px;width:2784px;height:2px;background:#575757;"></div>
<div class="t" style="left:424.0px;top:1210.3px;font-size:21.5px;color:#fff;font-weight:700;">2023, 2024 (5)</div>
<div class="r" style="left:442px;top:1264px;width:28px;height:28px;border:3.5px solid #c4c4c8;border-radius:4px"></div>
<svg class="r" style="left:584px;top:1265px;" width="32" height="32" viewBox="0 0 24 24"><path fill="#fff" d="M1 11v10h5v-6h4v6h5V11L8 6z M10 3v1.97l7 5V11h2v2h-2v2h2v2h-2v4h6V3H10zm9 6h-2V7h2v2z"/></svg>
<div class="t" style="left:640.0px;top:1266.5px;font-size:25.6px;color:#fff;font-weight:700;text-decoration:underline;text-decoration-thickness:2.4px;text-underline-offset:1.4px">Real Estate California</div>
<div class="t" style="right:2336.2px;top:1265.0px;font-size:26px;color:#d8d8d8;">400,000</div>
<div class="t" style="right:2165.2px;top:1265.0px;font-size:26px;color:#d8d8d8;">$1.00</div>
<div class="t" style="right:1987.2px;top:1265.0px;font-size:26px;color:#d8d8d8;">$400,000</div>
<div class="t" style="right:1820.2px;top:1265.0px;font-size:26px;color:#d8d8d8;">$1.03</div>
<div class="t" style="right:1653.2px;top:1265.0px;font-size:26px;color:#d8d8d8;">$412,000</div>
<div class="t" style="right:1512.7px;top:1265.0px;font-size:26px;color:#d8d8d8;">$22,800</div>
<div class="t" style="right:1316.2px;top:1265.0px;font-size:26px;color:#d8d8d8;">$12,000</div>
<div class="t" style="right:1166.2px;top:1265.0px;font-size:26px;color:#4caf50;">$34,800</div>
<div class="t" style="right:982.6px;top:1265.0px;font-size:26px;color:#d8d8d8;">( $377,200 )</div>
<div class="t" style="right:872.7px;top:1265.0px;font-size:26px;color:#4caf50;">1.08</div>
<div class="t" style="right:748.5px;top:1265.0px;font-size:26px;color:#4caf50;">4.20</div>
<div class="t" style="right:672.2px;top:1265.0px;font-size:26px;color:#d8d8d8;">3</div>
<div class="r" style="left:408px;top:1314px;width:2784px;height:2px;background:#3b3b3b;"></div>
<div class="r" style="left:442px;top:1336px;width:28px;height:28px;border:3.5px solid #c4c4c8;border-radius:4px"></div>
<svg class="r" style="left:588px;top:1341px;" width="26" height="26" viewBox="0 0 26 26"><path fill="#fff" d="M0 10.5h4.4v7L0 22z M7 5.1h4.1v10.7l-2.5-2.5L7 14.9z M13.5 0h4v14.4l-4 3.9z M19.6 10.4h6.4v6.4z"/><polyline points="0.9,25.2 8.6,17.4 13.6,22.4 23.5,12.5" fill="none" stroke="#fff" stroke-width="3"/></svg>
<div class="t" style="left:640.0px;top:1338.5px;font-size:25.6px;color:#fff;font-weight:700;text-decoration:underline;text-decoration-thickness:2.4px;text-underline-offset:1.4px">KKR</div>
<div class="t" style="right:2336.2px;top:1337.0px;font-size:26px;color:#d8d8d8;">160,250</div>
<div class="t" style="right:2165.2px;top:1337.0px;font-size:26px;color:#d8d8d8;">$1.00</div>
<div class="t" style="right:1987.2px;top:1337.0px;font-size:26px;color:#d8d8d8;">$160,250</div>
<div class="t" style="right:1820.2px;top:1337.0px;font-size:26px;color:#d8d8d8;">$1.00</div>
<div class="t" style="right:1653.2px;top:1337.0px;font-size:26px;color:#d8d8d8;">$160,250</div>
<div class="t" style="right:1512.7px;top:1337.0px;font-size:26px;color:#d8d8d8;">-</div>
<div class="t" style="right:1316.2px;top:1337.0px;font-size:26px;color:#d8d8d8;">-</div>
<div class="t" style="right:1166.2px;top:1337.0px;font-size:26px;color:#d8d8d8;">-</div>
<div class="t" style="right:982.6px;top:1337.0px;font-size:26px;color:#d8d8d8;">( $160,250 )</div>
<div class="t" style="right:872.7px;top:1337.0px;font-size:26px;color:#d8d8d8;">1.00</div>
<div class="t" style="right:748.5px;top:1337.0px;font-size:26px;color:#d8d8d8;">-</div>
<div class="t" style="right:672.2px;top:1337.0px;font-size:26px;color:#d8d8d8;">1</div>
<div class="r" style="left:408px;top:1386px;width:2784px;height:2px;background:#3b3b3b;"></div>
<div class="r" style="left:442px;top:1408px;width:28px;height:28px;border:3.5px solid #c4c4c8;border-radius:4px"></div>
<svg class="r" style="left:588px;top:1413px;" width="26" height="26" viewBox="0 0 26 26"><path fill="#fff" d="M0 10.5h4.4v7L0 22z M7 5.1h4.1v10.7l-2.5-2.5L7 14.9z M13.5 0h4v14.4l-4 3.9z M19.6 10.4h6.4v6.4z"/><polyline points="0.9,25.2 8.6,17.4 13.6,22.4 23.5,12.5" fill="none" stroke="#fff" stroke-width="3"/></svg>
<div class="t" style="left:640.0px;top:1410.5px;font-size:25.6px;color:#fff;font-weight:700;text-decoration:underline;text-decoration-thickness:2.4px;text-underline-offset:1.4px">SLP</div>
<div class="t" style="right:2336.2px;top:1409.0px;font-size:26px;color:#d8d8d8;">83,333.34</div>
<div class="t" style="right:2165.2px;top:1409.0px;font-size:26px;color:#d8d8d8;">$1.00</div>
<div class="t" style="right:1987.2px;top:1409.0px;font-size:26px;color:#d8d8d8;">$83,333</div>
<div class="t" style="right:1820.2px;top:1409.0px;font-size:26px;color:#d8d8d8;">$1.00</div>
<div class="t" style="right:1653.2px;top:1409.0px;font-size:26px;color:#d8d8d8;">$83,333</div>
<div class="t" style="right:1512.7px;top:1409.0px;font-size:26px;color:#d8d8d8;">-</div>
<div class="t" style="right:1316.2px;top:1409.0px;font-size:26px;color:#d8d8d8;">-</div>
<div class="t" style="right:1166.2px;top:1409.0px;font-size:26px;color:#d8d8d8;">-</div>
<div class="t" style="right:982.6px;top:1409.0px;font-size:26px;color:#d8d8d8;">( $83,333 )</div>
<div class="t" style="right:872.7px;top:1409.0px;font-size:26px;color:#d8d8d8;">1.00</div>
<div class="t" style="right:748.5px;top:1409.0px;font-size:26px;color:#d8d8d8;">-</div>
<div class="t" style="right:672.2px;top:1409.0px;font-size:26px;color:#d8d8d8;">1</div>
<div class="r" style="left:408px;top:1458px;width:2784px;height:2px;background:#3b3b3b;"></div>
<div class="r" style="left:442px;top:1480px;width:28px;height:28px;border:3.5px solid #c4c4c8;border-radius:4px"></div>
<svg class="r" style="left:588px;top:1485px;" width="25" height="25" viewBox="0 0 25 25"><rect x="0" y="0" width="24.5" height="24.5" rx="3.5" fill="#fff"/><path d="M3.2 20h18.2l-5.8-7.6-4.3 5.6-2.6-3.2z" fill="#212121"/></svg>
<div class="t" style="left:640.0px;top:1482.5px;font-size:25.6px;color:#fff;font-weight:700;text-decoration:underline;text-decoration-thickness:2.4px;text-underline-offset:1.4px">Art #2</div>
<svg class="r" style="left:727px;top:1488px;" width="22" height="20" viewBox="0 0 22 20"><g fill="#7f8ad0"><rect x="0" y="0" width="21.5" height="2.4"/><rect x="0" y="5.3" width="21.5" height="2.4"/><rect x="0" y="10.6" width="21.5" height="2.4"/><rect x="0" y="15.9" width="13.5" height="2.4"/></g></svg>
<div class="t" style="right:2336.2px;top:1481.0px;font-size:26px;color:#d8d8d8;">25,000</div>
<div class="t" style="right:2165.2px;top:1481.0px;font-size:26px;color:#d8d8d8;">$1.00</div>
<div class="t" style="right:1987.2px;top:1481.0px;font-size:26px;color:#d8d8d8;">$25,000</div>
<div class="t" style="right:1820.2px;top:1481.0px;font-size:26px;color:#d8d8d8;">$1.08</div>
<div class="t" style="right:1653.2px;top:1481.0px;font-size:26px;color:#d8d8d8;">$27,000</div>
<div class="t" style="right:1512.7px;top:1481.0px;font-size:26px;color:#d8d8d8;">-</div>
<div class="t" style="right:1316.2px;top:1481.0px;font-size:26px;color:#d8d8d8;">$2,000</div>
<div class="t" style="right:1166.2px;top:1481.0px;font-size:26px;color:#4caf50;">$2,000</div>
<div class="t" style="right:982.6px;top:1481.0px;font-size:26px;color:#d8d8d8;">( $25,000 )</div>
<div class="t" style="right:872.7px;top:1481.0px;font-size:26px;color:#4caf50;">1.08</div>
<div class="t" style="right:748.5px;top:1481.0px;font-size:26px;color:#4caf50;">8.41</div>
<div class="t" style="right:674.0px;top:1487.6px;font-size:17px;color:#ddd;">‹</div>
<div class="r" style="left:408px;top:1530px;width:2784px;height:2px;background:#3b3b3b;"></div>
<div class="r" style="left:442px;top:1552px;width:28px;height:28px;border:3.5px solid #c4c4c8;border-radius:4px"></div>
<svg class="r" style="left:588px;top:1557px;" width="25" height="25" viewBox="0 0 25 25"><rect x="0" y="0" width="24.5" height="24.5" rx="3.5" fill="#fff"/><path d="M3.2 20h18.2l-5.8-7.6-4.3 5.6-2.6-3.2z" fill="#212121"/></svg>
<div class="t" style="left:640.0px;top:1554.5px;font-size:25.6px;color:#fff;font-weight:700;text-decoration:underline;text-decoration-thickness:2.4px;text-underline-offset:1.4px">Art #1</div>
<svg class="r" style="left:727px;top:1560px;" width="22" height="20" viewBox="0 0 22 20"><g fill="#7f8ad0"><rect x="0" y="0" width="21.5" height="2.4"/><rect x="0" y="5.3" width="21.5" height="2.4"/><rect x="0" y="10.6" width="21.5" height="2.4"/><rect x="0" y="15.9" width="13.5" height="2.4"/></g></svg>
<div class="t" style="right:2336.2px;top:1553.0px;font-size:26px;color:#d8d8d8;">15,000</div>
<div class="t" style="right:2165.2px;top:1553.0px;font-size:26px;color:#d8d8d8;">$1.00</div>
<div class="t" style="right:1987.2px;top:1553.0px;font-size:26px;color:#d8d8d8;">$15,000</div>
<div class="t" style="right:1820.2px;top:1553.0px;font-size:26px;color:#d8d8d8;">$1.05</div>
<div class="t" style="right:1653.2px;top:1553.0px;font-size:26px;color:#d8d8d8;">$15,750</div>
<div class="t" style="right:1512.7px;top:1553.0px;font-size:26px;color:#d8d8d8;">-</div>
<div class="t" style="right:1316.2px;top:1553.0px;font-size:26px;color:#d8d8d8;">$750</div>
<div class="t" style="right:1166.2px;top:1553.0px;font-size:26px;color:#4caf50;">$750</div>
<div class="t" style="right:982.6px;top:1553.0px;font-size:26px;color:#d8d8d8;">( $15,000 )</div>
<div class="t" style="right:872.7px;top:1553.0px;font-size:26px;color:#4caf50;">1.05</div>
<div class="t" style="right:748.5px;top:1553.0px;font-size:26px;color:#4caf50;">2.89</div>
<div class="t" style="right:674.0px;top:1559.6px;font-size:17px;color:#ddd;">‹</div>
<div class="r" style="left:408px;top:1604px;width:2784px;height:2px;background:repeating-linear-gradient(90deg,#c4c4c4 0 7.5px,transparent 7.5px 12.7px)"></div>
<div class="t" style="right:1991.3px;top:1628.4px;font-size:25.5px;color:#fff;font-weight:700;">$10,364,991</div>
<div class="t" style="right:1657.3px;top:1628.4px;font-size:25.5px;color:#fff;font-weight:700;">$12,271,751</div>
<div class="t" style="right:1515.5px;top:1628.4px;font-size:25.5px;color:#fff;font-weight:700;">$556,740</div>
<div class="t" style="right:1319.2px;top:1628.4px;font-size:25.5px;color:#fff;font-weight:700;">$1,884,948</div>
<div class="t" style="right:1169.0px;top:1628.4px;font-size:25.5px;color:#4caf50;font-weight:700;">$2,441,688</div>
<div class="t" style="right:986.2px;top:1628.4px;font-size:25.5px;color:#fff;font-weight:700;">( $9,787,251 )</div>
<div class="t" style="right:875.8px;top:1628.4px;font-size:25.5px;color:#4caf50;font-weight:700;">1.24</div>
<div class="t" style="right:673.3px;top:1628.4px;font-size:25.5px;color:#fff;font-weight:700;">100</div>
<svg class="r" style="left:3052px;top:1622.5px;" width="36" height="36" viewBox="0 0 24 24"><path fill="#6a77d0" d="M11 21h-1l1-7H7.5c-.58 0-.57-.32-.38-.66.19-.34.05-.08.07-.12C8.48 10.94 10.42 7.54 13 3h1l-1 7h3.5c.49 0 .56.33.47.51l-.07.15C12.96 17.55 11 21 11 21z"/></svg>
<div class="r" style="left:408px;top:1692px;width:2784px;height:296px;background:#212121;border-radius:10px;overflow:hidden"><div style="position:absolute;left:0;top:0;width:2784px;height:48px;background:#263238"></div></div>
<div class="t" style="left:425.0px;top:1703.7px;font-size:24px;color:#dcdce4;-webkit-text-stroke:0.7px #dcdce4;letter-spacing:2.8px;">TRANSFORMS</div>
<div class="r" style="left:424px;top:1756px;width:2752px;height:64px;background:#444444;"></div>
<div class="r" style="left:440px;top:1769px;width:108px;height:39px;border-radius:8px;background:rgba(255,255,255,0.04)"></div>
<svg class="r" style="left:459px;top:1778px;" width="13" height="18" viewBox="0 0 13 18"><path d="M0 0v18l13-9z" fill="#7a7a7a"/></svg>
<div class="t" style="left:488.0px;top:1779.9px;font-size:19px;color:#7a7a7a;-webkit-text-stroke:0.7px #7a7a7a;letter-spacing:0.9px;">RUN</div>
<div class="r" style="left:3118px;top:1767px;width:42px;height:42px;border-radius:50%;background:#e91e63"></div>
<svg class="r" style="left:3126px;top:1775px;" width="26" height="26" viewBox="0 0 26 26"><path d="M13 3v20M3 13h20" stroke="#fff" stroke-width="3.4"/></svg>
<div class="r" style="left:458px;top:1844px;width:28px;height:28px;border:3.5px solid #c4c4c8;border-radius:4px"></div>
<div class="t" style="left:566.0px;top:1845.4px;font-size:25.5px;color:#fff;">Label</div>
<svg class="r" style="left:633px;top:1846px;" width="28" height="28" viewBox="3 3 18 18"><path fill="#fff" d="M20 12l-1.41-1.41L13 16.17V4h-2v12.17l-5.58-5.59L4 12l8 8 8-8z"/></svg>
<div class="t" style="left:2680.0px;top:1845.9px;font-size:25.5px;color:#fff;">Assignment</div>
<div class="t" style="left:2868.0px;top:1845.9px;font-size:25.5px;color:#fff;">Handler</div>
<div class="t" style="left:3028.0px;top:1845.9px;font-size:25.5px;color:#fff;">Creator</div>
<div class="r" style="left:424px;top:1898px;width:2752px;height:2px;background:#3b3b3b;"></div>
<div class="r" style="left:458px;top:1921px;width:28px;height:28px;border:3.5px solid #c4c4c8;border-radius:4px"></div>
<div class="r" style="left:521px;top:1926px;width:19px;height:19px;background:#fff;"></div>
<div class="t" style="left:566.0px;top:1922.6px;font-size:25.3px;color:#ececec;">Simple Field</div>
<div class="t" style="left:2680.0px;top:1922.6px;font-size:25.3px;color:#ececec;">AssetList</div>
<div class="t" style="left:2868.0px;top:1922.6px;font-size:25.3px;color:#ececec;">Simple Field</div>
<div class="t" style="left:3028.0px;top:1922.6px;font-size:25.3px;color:#ececec;">User</div>
<div class="r" style="left:3224px;top:200px;width:16px;height:1896px;background:#121212;"></div>
<div class="r" style="left:3240px;top:200px;width:600px;height:1896px;background:#212121;"></div>
<div class="r" style="left:3240px;top:200px;width:2px;height:1896px;background:#3a3a3a;"></div>
<div class="r" style="left:3237px;top:201px;width:603px;height:95px;background:#424242;border-radius:10px 0 0 0"></div>
<div class="t" style="left:3281.5px;top:229.5px;font-size:39px;color:#fff;">Extra Filters</div>
<div class="t" style="left:3644.0px;top:236.6px;font-size:23.5px;color:#fff;-webkit-text-stroke:0.7px #fff;letter-spacing:0.8px;">CLEAR</div>
<svg class="r" style="left:3781px;top:238px;" width="22" height="22" viewBox="0 0 22 22"><path d="M2 2l18 18M20 2L2 20" stroke="#fff" stroke-width="3.2"/></svg>
<div class="r" style="left:3242px;top:296px;width:588px;height:48px;background:#263238;border-radius:8px 0 0 0"></div>
<div class="t" style="left:3258.0px;top:309.0px;font-size:23px;color:#dcdce4;-webkit-text-stroke:0.7px #dcdce4;letter-spacing:3.7px;">ASSET</div>
<div class="r" style="left:3258px;top:360px;width:566px;height:80px;background:#2a2a2a;border-radius:8px 8px 0 0;border-bottom:2px solid #9a9a9a"></div>
<div class="t" style="left:3290.0px;top:371.2px;font-size:24.2px;color:#c6c6c6;">Account</div>
<svg class="r" style="left:3766px;top:396px;" width="20" height="10" viewBox="0 0 20 10"><path d="M0 0h20L10 10z" fill="#bcbcc4"/></svg>
<div class="r" style="left:3258px;top:440px;width:566px;height:80px;background:#2a2a2a;border-radius:8px 8px 0 0;border-bottom:2px solid #9a9a9a"></div>
<div class="t" style="left:3290.0px;top:451.2px;font-size:24.2px;color:#c6c6c6;">Group</div>
<svg class="r" style="left:3766px;top:476px;" width="20" height="10" viewBox="0 0 20 10"><path d="M0 0h20L10 10z" fill="#bcbcc4"/></svg>
<div class="r" style="left:3258px;top:520px;width:566px;height:80px;background:#2a2a2a;border-radius:8px 8px 0 0;border-bottom:2px solid #9a9a9a"></div>
<div class="t" style="left:3290.0px;top:531.2px;font-size:24.2px;color:#c6c6c6;">List</div>
<svg class="r" style="left:3766px;top:556px;" width="20" height="10" viewBox="0 0 20 10"><path d="M0 0h20L10 10z" fill="#bcbcc4"/></svg>
<div class="r" style="left:3242px;top:616px;width:588px;height:48px;background:#263238;border-radius:8px 0 0 0"></div>
<div class="t" style="left:3258.0px;top:629.0px;font-size:23px;color:#dcdce4;-webkit-text-stroke:0.7px #dcdce4;letter-spacing:3.7px;">MARKET</div>
<div class="r" style="left:3258px;top:680px;width:566px;height:80px;background:#2a2a2a;border-radius:8px 8px 0 0;border-bottom:2px solid #9a9a9a"></div>
<div class="t" style="left:3290.0px;top:691.2px;font-size:24.2px;color:#c6c6c6;">Sector</div>
<svg class="r" style="left:3766px;top:716px;" width="20" height="10" viewBox="0 0 20 10"><path d="M0 0h20L10 10z" fill="#bcbcc4"/></svg>
<div class="r" style="left:3258px;top:760px;width:566px;height:80px;background:#2a2a2a;border-radius:8px 8px 0 0;border-bottom:2px solid #9a9a9a"></div>
<div class="t" style="left:3290.0px;top:771.2px;font-size:24.2px;color:#c6c6c6;">Geography</div>
<svg class="r" style="left:3766px;top:796px;" width="20" height="10" viewBox="0 0 20 10"><path d="M0 0h20L10 10z" fill="#bcbcc4"/></svg>
<div class="r" style="left:3242px;top:856px;width:588px;height:48px;background:#263238;border-radius:8px 0 0 0"></div>
<div class="t" style="left:3258.0px;top:869.0px;font-size:23px;color:#dcdce4;-webkit-text-stroke:0.7px #dcdce4;letter-spacing:3.7px;">ORGANIZATION</div>
<div class="r" style="left:3258px;top:920px;width:566px;height:80px;background:#2a2a2a;border-radius:8px 8px 0 0;border-bottom:2px solid #9a9a9a"></div>
<div class="t" style="left:3290.0px;top:931.2px;font-size:24.2px;color:#c6c6c6;">Asset Class</div>
<svg class="r" style="left:3766px;top:956px;" width="20" height="10" viewBox="0 0 20 10"><path d="M0 0h20L10 10z" fill="#bcbcc4"/></svg>
<div class="r" style="left:3258px;top:1000px;width:566px;height:80px;background:#2a2a2a;border-radius:8px 8px 0 0;border-bottom:2px solid #9a9a9a"></div>
<div class="t" style="left:3290.0px;top:1011.2px;font-size:24.2px;color:#c6c6c6;">Asset Schema</div>
<svg class="r" style="left:3766px;top:1036px;" width="20" height="10" viewBox="0 0 20 10"><path d="M0 0h20L10 10z" fill="#bcbcc4"/></svg>
<div class="r" style="left:3242px;top:1096px;width:588px;height:48px;background:#263238;border-radius:8px 0 0 0"></div>
<div class="t" style="left:3258.0px;top:1109.0px;font-size:23px;color:#dcdce4;-webkit-text-stroke:0.7px #dcdce4;letter-spacing:3.7px;">RELATIONSHIP</div>
<div class="r" style="left:3258px;top:1160px;width:566px;height:80px;background:#2a2a2a;border-radius:8px 8px 0 0;border-bottom:2px solid #9a9a9a"></div>
<div class="t" style="left:3290.0px;top:1171.2px;font-size:24.2px;color:#c6c6c6;">Sponsor</div>
<svg class="r" style="left:3766px;top:1196px;" width="20" height="10" viewBox="0 0 20 10"><path d="M0 0h20L10 10z" fill="#bcbcc4"/></svg>
<div class="r" style="left:3242px;top:1256px;width:588px;height:48px;background:#263238;border-radius:8px 0 0 0"></div>
<div class="t" style="left:3258.0px;top:1269.0px;font-size:23px;color:#dcdce4;-webkit-text-stroke:0.7px #dcdce4;letter-spacing:3.7px;">RISK</div>
<div class="r" style="left:3258px;top:1320px;width:566px;height:80px;background:#2a2a2a;border-radius:8px 8px 0 0;border-bottom:2px solid #9a9a9a"></div>
<div class="t" style="left:3290.0px;top:1331.2px;font-size:24.2px;color:#c6c6c6;">Liquidity</div>
<svg class="r" style="left:3766px;top:1356px;" width="20" height="10" viewBox="0 0 20 10"><path d="M0 0h20L10 10z" fill="#bcbcc4"/></svg>
<div class="r" style="left:3258px;top:1400px;width:566px;height:80px;background:#2a2a2a;border-radius:8px 8px 0 0;border-bottom:2px solid #9a9a9a"></div>
<div class="t" style="left:3290.0px;top:1411.2px;font-size:24.2px;color:#c6c6c6;">Risk Level</div>
<svg class="r" style="left:3766px;top:1436px;" width="20" height="10" viewBox="0 0 20 10"><path d="M0 0h20L10 10z" fill="#bcbcc4"/></svg>
<div class="r" style="left:3242px;top:1496px;width:588px;height:48px;background:#263238;border-radius:8px 0 0 0"></div>
<div class="t" style="left:3258.0px;top:1509.0px;font-size:23px;color:#dcdce4;-webkit-text-stroke:0.7px #dcdce4;letter-spacing:3.7px;">TAX</div>
<div class="r" style="left:3258px;top:1560px;width:566px;height:80px;background:#2a2a2a;border-radius:8px 8px 0 0;border-bottom:2px solid #9a9a9a"></div>
<div class="t" style="left:3290.0px;top:1571.2px;font-size:24.2px;color:#c6c6c6;">Taxable</div>
<svg class="r" style="left:3766px;top:1596px;" width="20" height="10" viewBox="0 0 20 10"><path d="M0 0h20L10 10z" fill="#bcbcc4"/></svg>
<div class="r" style="left:3258px;top:1640px;width:566px;height:80px;background:#2a2a2a;border-radius:8px 8px 0 0;border-bottom:2px solid #9a9a9a"></div>
<div class="t" style="left:3290.0px;top:1651.2px;font-size:24.2px;color:#c6c6c6;">Tax Form Type</div>
<svg class="r" style="left:3766px;top:1676px;" width="20" height="10" viewBox="0 0 20 10"><path d="M0 0h20L10 10z" fill="#bcbcc4"/></svg>
<div class="r" style="left:3258px;top:1720px;width:566px;height:80px;background:#2a2a2a;border-radius:8px 8px 0 0;border-bottom:2px solid #9a9a9a"></div>
<div class="t" style="left:3290.0px;top:1731.2px;font-size:24.2px;color:#c6c6c6;">Tax Form Sent to Tax Preparer</div>
<svg class="r" style="left:3766px;top:1756px;" width="20" height="10" viewBox="0 0 20 10"><path d="M0 0h20L10 10z" fill="#bcbcc4"/></svg>
<div class="r" style="left:3242px;top:1815px;width:598px;height:2px;background:#1a1a1a;"></div>
<div class="r" style="left:3231px;top:195px;width:605px;height:1608px;border:6.5px solid #ffff00;border-radius:16px"></div>
<div class="r" style="left:360px;top:2096px;width:3480px;height:64px;background:#3f51b5;"></div>
<svg class="r" style="left:367.3px;top:2114px;" width="31.5" height="31.5" viewBox="0 0 24 24"><path fill="#fff" d="M18 8h-1V6c0-2.76-2.24-5-5-5S7 3.24 7 6v2H6c-1.1 0-2 .9-2 2v10c0 1.1.9 2 2 2h12c1.1 0 2-.9 2-2V10c0-1.1-.9-2-2-2zm-6 9c-1.1 0-2-.9-2-2s.9-2 2-2 2 .9 2 2-.9 2-2 2zm3.1-9H8.9V6c0-1.71 1.39-3.1 3.1-3.1 1.71 0 3.1 1.39 3.1 3.1v2z"/></svg>
<svg class="r" style="left:423.7px;top:2114px;" width="32" height="32" viewBox="0 0 24 24"><path fill="#fff" d="M17 3H5c-1.11 0-2 .9-2 2v14c0 1.1.89 2 2 2h14c1.1 0 2-.9 2-2V7l-4-4zm-5 16c-1.66 0-3-1.34-3-3s1.34-3 3-3 3 1.34 3 3-1.34 3-3 3zm3-10H5V5h10v4z"/></svg>
<div class="t" style="left:465.0px;top:2117.8px;font-size:24.5px;color:#fff;letter-spacing:0.75px;">08/22/25 05:01:37 PM</div></div></body></html>
